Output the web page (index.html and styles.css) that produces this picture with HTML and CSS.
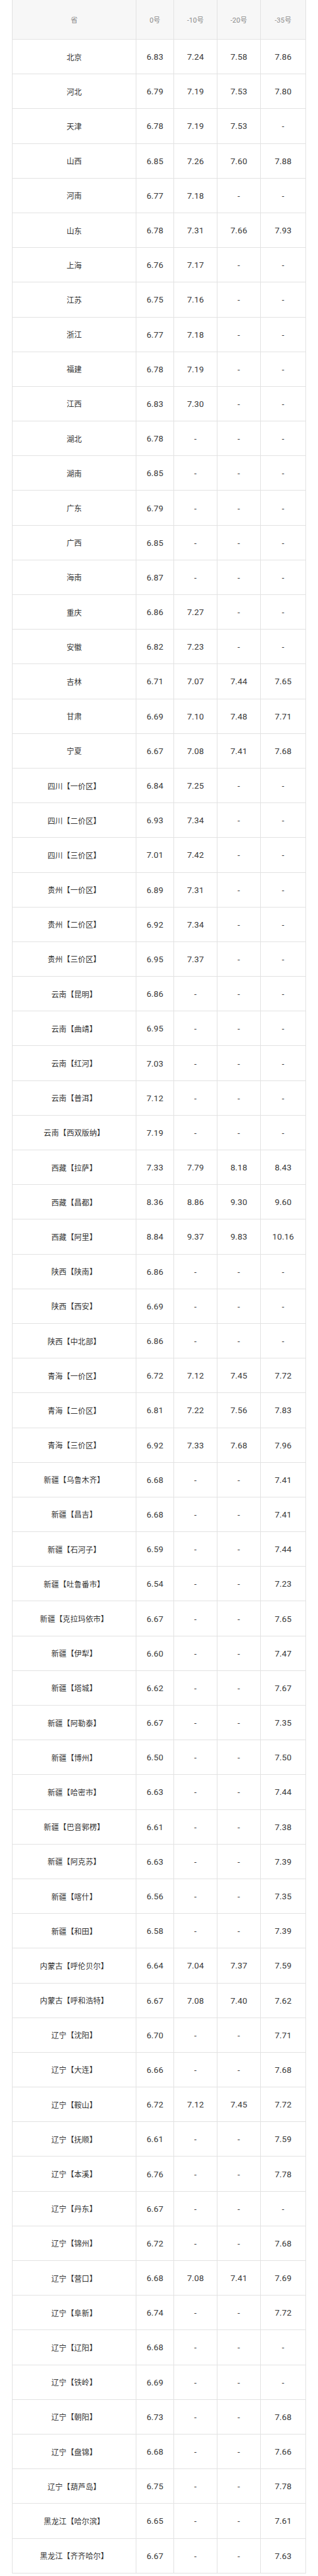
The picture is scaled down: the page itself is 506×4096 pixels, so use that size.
FILE: index.html
```html
<!DOCTYPE html>
<html lang="zh-CN">
<head>
<meta charset="utf-8">
<title>油价表</title>
<link rel="stylesheet" href="styles.css">
</head>
<body>
<div class="wrap">
<table class="price">
<colgroup>
<col class="c-name"><col class="c-0"><col class="c-10"><col class="c-20"><col class="c-35">
</colgroup>
<thead>
<tr><th>省</th><th>0号</th><th>-10号</th><th>-20号</th><th>-35号</th></tr>
</thead>
<tbody>
<tr><td>北京</td><td>6.83</td><td>7.24</td><td>7.58</td><td>7.86</td></tr>
<tr><td>河北</td><td>6.79</td><td>7.19</td><td>7.53</td><td>7.80</td></tr>
<tr><td>天津</td><td>6.78</td><td>7.19</td><td>7.53</td><td>-</td></tr>
<tr><td>山西</td><td>6.85</td><td>7.26</td><td>7.60</td><td>7.88</td></tr>
<tr><td>河南</td><td>6.77</td><td>7.18</td><td>-</td><td>-</td></tr>
<tr><td>山东</td><td>6.78</td><td>7.31</td><td>7.66</td><td>7.93</td></tr>
<tr><td>上海</td><td>6.76</td><td>7.17</td><td>-</td><td>-</td></tr>
<tr><td>江苏</td><td>6.75</td><td>7.16</td><td>-</td><td>-</td></tr>
<tr><td>浙江</td><td>6.77</td><td>7.18</td><td>-</td><td>-</td></tr>
<tr><td>福建</td><td>6.78</td><td>7.19</td><td>-</td><td>-</td></tr>
<tr><td>江西</td><td>6.83</td><td>7.30</td><td>-</td><td>-</td></tr>
<tr><td>湖北</td><td>6.78</td><td>-</td><td>-</td><td>-</td></tr>
<tr><td>湖南</td><td>6.85</td><td>-</td><td>-</td><td>-</td></tr>
<tr><td>广东</td><td>6.79</td><td>-</td><td>-</td><td>-</td></tr>
<tr><td>广西</td><td>6.85</td><td>-</td><td>-</td><td>-</td></tr>
<tr><td>海南</td><td>6.87</td><td>-</td><td>-</td><td>-</td></tr>
<tr><td>重庆</td><td>6.86</td><td>7.27</td><td>-</td><td>-</td></tr>
<tr><td>安徽</td><td>6.82</td><td>7.23</td><td>-</td><td>-</td></tr>
<tr><td>吉林</td><td>6.71</td><td>7.07</td><td>7.44</td><td>7.65</td></tr>
<tr><td>甘肃</td><td>6.69</td><td>7.10</td><td>7.48</td><td>7.71</td></tr>
<tr><td>宁夏</td><td>6.67</td><td>7.08</td><td>7.41</td><td>7.68</td></tr>
<tr><td>四川【一价区】</td><td>6.84</td><td>7.25</td><td>-</td><td>-</td></tr>
<tr><td>四川【二价区】</td><td>6.93</td><td>7.34</td><td>-</td><td>-</td></tr>
<tr><td>四川【三价区】</td><td>7.01</td><td>7.42</td><td>-</td><td>-</td></tr>
<tr><td>贵州【一价区】</td><td>6.89</td><td>7.31</td><td>-</td><td>-</td></tr>
<tr><td>贵州【二价区】</td><td>6.92</td><td>7.34</td><td>-</td><td>-</td></tr>
<tr><td>贵州【三价区】</td><td>6.95</td><td>7.37</td><td>-</td><td>-</td></tr>
<tr><td>云南【昆明】</td><td>6.86</td><td>-</td><td>-</td><td>-</td></tr>
<tr><td>云南【曲靖】</td><td>6.95</td><td>-</td><td>-</td><td>-</td></tr>
<tr><td>云南【红河】</td><td>7.03</td><td>-</td><td>-</td><td>-</td></tr>
<tr><td>云南【普洱】</td><td>7.12</td><td>-</td><td>-</td><td>-</td></tr>
<tr><td>云南【西双版纳】</td><td>7.19</td><td>-</td><td>-</td><td>-</td></tr>
<tr><td>西藏【拉萨】</td><td>7.33</td><td>7.79</td><td>8.18</td><td>8.43</td></tr>
<tr><td>西藏【昌都】</td><td>8.36</td><td>8.86</td><td>9.30</td><td>9.60</td></tr>
<tr><td>西藏【阿里】</td><td>8.84</td><td>9.37</td><td>9.83</td><td>10.16</td></tr>
<tr><td>陕西【陕南】</td><td>6.86</td><td>-</td><td>-</td><td>-</td></tr>
<tr><td>陕西【西安】</td><td>6.69</td><td>-</td><td>-</td><td>-</td></tr>
<tr><td>陕西【中北部】</td><td>6.86</td><td>-</td><td>-</td><td>-</td></tr>
<tr><td>青海【一价区】</td><td>6.72</td><td>7.12</td><td>7.45</td><td>7.72</td></tr>
<tr><td>青海【二价区】</td><td>6.81</td><td>7.22</td><td>7.56</td><td>7.83</td></tr>
<tr><td>青海【三价区】</td><td>6.92</td><td>7.33</td><td>7.68</td><td>7.96</td></tr>
<tr><td>新疆【乌鲁木齐】</td><td>6.68</td><td>-</td><td>-</td><td>7.41</td></tr>
<tr><td>新疆【昌吉】</td><td>6.68</td><td>-</td><td>-</td><td>7.41</td></tr>
<tr><td>新疆【石河子】</td><td>6.59</td><td>-</td><td>-</td><td>7.44</td></tr>
<tr><td>新疆【吐鲁番市】</td><td>6.54</td><td>-</td><td>-</td><td>7.23</td></tr>
<tr><td>新疆【克拉玛依市】</td><td>6.67</td><td>-</td><td>-</td><td>7.65</td></tr>
<tr><td>新疆【伊犁】</td><td>6.60</td><td>-</td><td>-</td><td>7.47</td></tr>
<tr><td>新疆【塔城】</td><td>6.62</td><td>-</td><td>-</td><td>7.67</td></tr>
<tr><td>新疆【阿勒泰】</td><td>6.67</td><td>-</td><td>-</td><td>7.35</td></tr>
<tr><td>新疆【博州】</td><td>6.50</td><td>-</td><td>-</td><td>7.50</td></tr>
<tr><td>新疆【哈密市】</td><td>6.63</td><td>-</td><td>-</td><td>7.44</td></tr>
<tr><td>新疆【巴音郭楞】</td><td>6.61</td><td>-</td><td>-</td><td>7.38</td></tr>
<tr><td>新疆【阿克苏】</td><td>6.63</td><td>-</td><td>-</td><td>7.39</td></tr>
<tr><td>新疆【喀什】</td><td>6.56</td><td>-</td><td>-</td><td>7.35</td></tr>
<tr><td>新疆【和田】</td><td>6.58</td><td>-</td><td>-</td><td>7.39</td></tr>
<tr><td>内蒙古【呼伦贝尔】</td><td>6.64</td><td>7.04</td><td>7.37</td><td>7.59</td></tr>
<tr><td>内蒙古【呼和浩特】</td><td>6.67</td><td>7.08</td><td>7.40</td><td>7.62</td></tr>
<tr><td>辽宁【沈阳】</td><td>6.70</td><td>-</td><td>-</td><td>7.71</td></tr>
<tr><td>辽宁【大连】</td><td>6.66</td><td>-</td><td>-</td><td>7.68</td></tr>
<tr><td>辽宁【鞍山】</td><td>6.72</td><td>7.12</td><td>7.45</td><td>7.72</td></tr>
<tr><td>辽宁【抚顺】</td><td>6.61</td><td>-</td><td>-</td><td>7.59</td></tr>
<tr><td>辽宁【本溪】</td><td>6.76</td><td>-</td><td>-</td><td>7.78</td></tr>
<tr><td>辽宁【丹东】</td><td>6.67</td><td>-</td><td>-</td><td>-</td></tr>
<tr><td>辽宁【锦州】</td><td>6.72</td><td>-</td><td>-</td><td>7.68</td></tr>
<tr><td>辽宁【营口】</td><td>6.68</td><td>7.08</td><td>7.41</td><td>7.69</td></tr>
<tr><td>辽宁【阜新】</td><td>6.74</td><td>-</td><td>-</td><td>7.72</td></tr>
<tr><td>辽宁【辽阳】</td><td>6.68</td><td>-</td><td>-</td><td>-</td></tr>
<tr><td>辽宁【铁岭】</td><td>6.69</td><td>-</td><td>-</td><td>-</td></tr>
<tr><td>辽宁【朝阳】</td><td>6.73</td><td>-</td><td>-</td><td>7.68</td></tr>
<tr><td>辽宁【盘锦】</td><td>6.68</td><td>-</td><td>-</td><td>7.66</td></tr>
<tr><td>辽宁【葫芦岛】</td><td>6.75</td><td>-</td><td>-</td><td>7.78</td></tr>
<tr><td>黑龙江【哈尔滨】</td><td>6.65</td><td>-</td><td>-</td><td>7.61</td></tr>
<tr><td>黑龙江【齐齐哈尔】</td><td>6.67</td><td>-</td><td>-</td><td>7.63</td></tr>
</tbody>
</table>
</div>
</body>
</html>
```
FILE: styles.css
```css
html, body {
  margin: 0;
  padding: 0;
  background: #ffffff;
}

.wrap {
  padding: 0 0 0 19px;
}

.price {
  table-layout: fixed;
  border-collapse: collapse;
  width: 467px;
  font-family: Roboto, "Noto Sans CJK SC", sans-serif;
  color: #3a3a3a;
}

.c-name { width: 197px; }
.c-0 { width: 60px; }
.c-10 { width: 69px; }
.c-20 { width: 69px; }
.c-35 { width: 72px; }

.price th,
.price td {
  border: 1px solid #e2e2e2;
  text-align: center;
  vertical-align: middle;
  padding: 0;
}

.price th {
  height: 62px;
  background: #f7f7f7;
  color: #8c8c8c;
  font-weight: 400;
  font-size: 11px;
  font-family: Roboto, "Noto Sans CJK SC", sans-serif;
  border-top: none;
}

.price td {
  height: 54.2px;
  font-size: 13.5px;
  letter-spacing: 0.1px;
}

.price td:first-child {
  font-size: 12px;
  font-family: "Noto Sans CJK SC", sans-serif;
  color: #333333;
}
```
